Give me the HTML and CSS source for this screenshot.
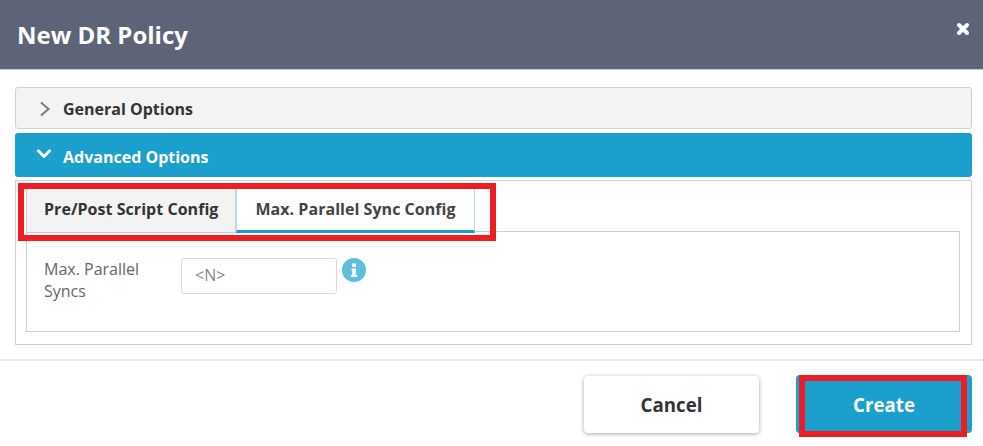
FILE: index.html
```html
<!DOCTYPE html>
<html lang="en">
<head>
<meta charset="utf-8">
<title>New DR Policy</title>
<link rel="stylesheet" href="styles.css">
</head>
<body>
<div class="modal">
  <header class="modal-head">
    <h1 class="modal-title">New DR Policy</h1>
    <svg class="close-icon" width="14" height="14" viewBox="0 0 14 14" aria-label="Close"><path d="M3 3l8 8M11 3l-8 8" stroke="#fff" stroke-width="4" stroke-linecap="round"/></svg>
  </header>
  <main class="modal-body">
    <div class="acc acc-closed">
      <svg class="chev" width="14" height="18" viewBox="0 0 14 18"><path d="M3 2.500l7.500 6.500L3 15.500" fill="none" stroke="#77797c" stroke-width="2"/></svg>
      <span>General Options</span>
    </div>
    <div class="acc acc-open">
      <svg class="chev" width="18" height="14" viewBox="0 0 18 14"><path d="M2.500 3l6.500 6.500L15.500 3" fill="none" stroke="#fff" stroke-width="3"/></svg>
      <span>Advanced Options</span>
    </div>
    <section class="panel">
      <div class="tabs">
        <div class="tab">Pre/Post Script Config</div>
        <div class="tab tab-active">Max. Parallel Sync Config</div>
      </div>
      <div class="tab-pane">
        <label class="field-label">Max. Parallel Syncs</label>
        <div class="fake-input">&lt;N&gt;</div>
        <svg class="info-icon" width="24" height="24" viewBox="0 0 24 24"><circle cx="12" cy="12" r="12" fill="#5bc0de"/><path d="M10 5.500h4v3.500h-4zM9.500 10.500h4.500v6.500h1.200v2H9v-2h1.200v-4.500H9.500z" fill="#fff"/></svg>
      </div>
    </section>
  </main>
  <footer class="modal-foot">
    <button class="btn btn-cancel">Cancel</button>
    <button class="btn btn-create">Create</button>
  </footer>
  <div class="mark mark-tabs"></div>
  <div class="mark mark-create"></div>
</div>
</body>
</html>
```

FILE: styles.css
```css
* { box-sizing: border-box; }
html, body { margin: 0; padding: 0; }
body { width: 983px; height: 446px; overflow: hidden; background: #fff; font-family: "Open Sans", "Liberation Sans", sans-serif; }
.modal { position: relative; width: 983px; height: 446px; display: flex; flex-direction: column; }
.modal-head { height: 70px; flex: none; background: #5e6477; border-bottom: 1px solid #c9ccd3; display: flex; align-items: center; justify-content: space-between; padding: 0 13px 0 17px; }
.modal-title { margin: 0; font-size: 24px; font-weight: 700; color: #fff; }
.close-icon { margin-bottom: 11px; }
.modal-body { height: 291px; flex: none; padding: 17px 11px 0 15px; border-bottom: 2px solid #e8ebef; }
.acc { display: flex; align-items: center; font-size: 16px; font-weight: 700; border-radius: 3px; }
.acc-closed { height: 42px; background: #f3f3f3; border: 1px solid #d0d0d0; color: #333; padding: 2px 0 0 22px; margin-bottom: 4px; }
.acc-closed .chev { margin-right: 11px; }
.acc-open { height: 44px; background: #1b9fcd; color: #fff; padding: 4px 0 0 20px; margin-bottom: 3px; }
.acc-open .chev { margin-right: 10px; margin-bottom: 6px; }
.panel { height: 165px; border: 1px solid #cfcfcf; padding: 6px 11px 12px 10px; }
.tabs { display: flex; height: 46px; }
.tab { height: 46px; padding: 0 17px 3px; display: flex; align-items: center; font-size: 16px; letter-spacing: 0.04px; font-weight: 700; color: #333; background: #f3f3f3; border: 1px solid #d0d0d0; border-bottom: 1px solid #c9c9c9; white-space: nowrap; }
.tab-active { background: #fff; color: #444; border: 1px solid #b5dcf5; border-bottom: 3px solid #1b9fcd; padding: 0 18px; }
.tab-pane { height: 101px; border: 1px solid #cfcfcf; padding: 26px 0 0 17px; display: flex; align-items: flex-start; margin-top: -2px; }
.field-label { width: 137px; font-size: 16px; line-height: 22px; color: #666; padding-right: 20px; }
.fake-input { width: 156px; height: 36px; border: 1px solid #d5dbe1; border-radius: 3px; font-size: 16px; color: #888; padding: 5px 13px; }
.info-icon { margin-left: 5px; }
.modal-foot { flex: 1; display: flex; justify-content: flex-end; align-items: flex-start; padding: 14px 11px 0 0; gap: 37px; }
.btn { height: 58px; border: 0; border-radius: 4px; font-family: inherit; font-size: 18.700px; font-weight: 700; }
.btn-cancel { width: 175px; height: 57px; margin-top: 1px; background: #fff; color: #333; box-shadow: 0 1px 4px rgba(0,0,0,.35); }
.btn-create { width: 176px; background: #1b9fcd; color: #fff; }
.mark { position: absolute; border: 6px solid #ee1c25; pointer-events: none; }
.mark-tabs { left: 18px; top: 183px; width: 478px; height: 58px; }
.mark-create { left: 799px; top: 375px; width: 168px; height: 62px; }
```
